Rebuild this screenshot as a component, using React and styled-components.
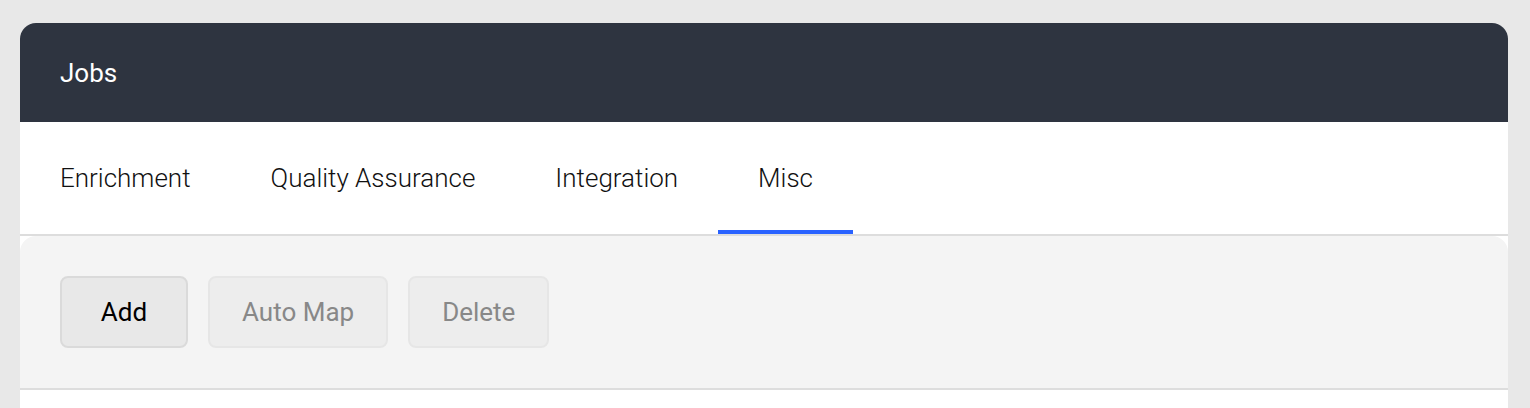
import React from "react";
import styled, { createGlobalStyle } from "styled-components";

const GlobalStyle = createGlobalStyle`
  html, body { margin: 0; padding: 0; background: #e8e8e8; }
  body { font-family: Roboto, "Liberation Sans", sans-serif; }
  * { box-sizing: border-box; }
`;

const Page = styled.div`
  padding: 23px 22px 0 20px;
  height: 408px;
  overflow: hidden;
`;

const Card = styled.section`
  background: #ffffff;
  border-radius: 16px 16px 0 0;
  overflow: hidden;
  min-height: 385px;
`;

const Header = styled.header`
  height: 99px;
  background: #2e3440;
  display: flex;
  align-items: center;
  padding: 0 40px;
  color: #ffffff;
  font-size: 26px;
  font-weight: 400;
`;

const Tabs = styled.nav`
  display: flex;
  border-bottom: 2px solid #dddddd;
`;

const Tab = styled.div`
  height: 112px;
  padding: 4px 40px 0;
  display: flex;
  align-items: center;
  font-size: 26px;
  font-weight: 300;
  color: #111111;
  border-bottom: 4px solid ${(p) => (p.$active ? "#2962ff" : "transparent")};
`;

const Panel = styled.div`
  background: #f4f4f4;
  border-radius: 16px 16px 0 0;
  border-bottom: 2px solid #dddddd;
  padding: 40px;
  display: flex;
  gap: 20px;
`;

const Button = styled.button`
  height: 72px;
  min-width: ${(p) => (p.$wide ? "128px" : "0")};
  padding: 0 32px;
  border-radius: 8px;
  font-family: Roboto, "Liberation Sans", sans-serif;
  font-size: 26px;
  font-weight: 400;
  border: 2px solid ${(p) => (p.disabled ? "#e6e6e6" : "#dadada")};
  background: ${(p) => (p.disabled ? "#ededed" : "#e8e8e8")};
  color: ${(p) => (p.disabled ? "#888888" : "#000000")};
`;

export default function App() {
  const tabs = ["Enrichment", "Quality Assurance", "Integration", "Misc"];
  return (
    <>
      <GlobalStyle />
      <Page>
        <Card>
          <Header>Jobs</Header>
          <Tabs>
            {tabs.map((t) => (
              <Tab key={t} $active={t === "Misc"}>
                {t}
              </Tab>
            ))}
          </Tabs>
          <Panel>
            <Button $wide>Add</Button>
            <Button disabled>Auto Map</Button>
            <Button disabled>Delete</Button>
          </Panel>
        </Card>
      </Page>
    </>
  );
}
